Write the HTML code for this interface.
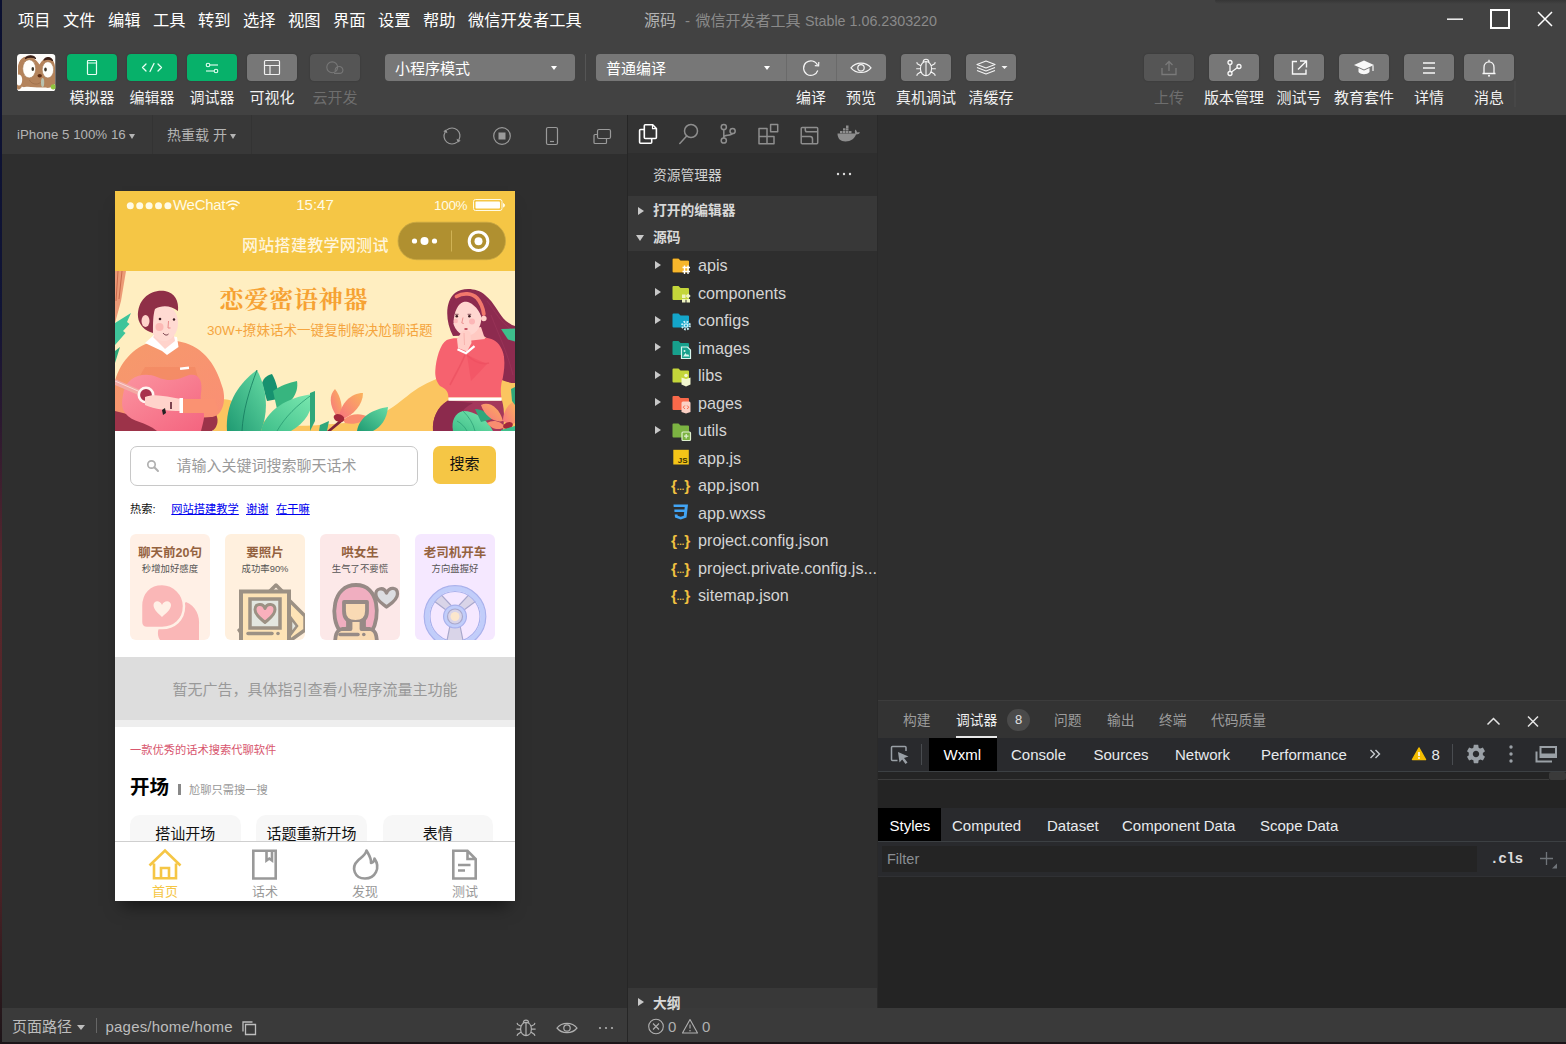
<!DOCTYPE html>
<html lang="zh-CN">
<head>
<meta charset="utf-8">
<title>源码 - 微信开发者工具 Stable 1.06.2303220</title>
<style>
*{box-sizing:border-box;margin:0;padding:0}
html,body{width:1566px;height:1044px;overflow:hidden}
body{background:linear-gradient(180deg,#0b1030 0,#101436 30%,#2a1830 40%,#5a282c 55%,#4a2226 85%,#1c1418 100%);font-family:"Liberation Sans","Noto Sans CJK SC",sans-serif;color:#fff;position:relative}
.abs{position:absolute}
#w{position:absolute;left:0;top:0;width:1566px;height:1044px}
#titlebar{left:2px;top:0;width:1564px;height:40px;background:#424242}
.menu{position:absolute;top:9px;font-size:16.250px;line-height:22px;color:#fff;white-space:nowrap}
#wtitle{left:644px;top:10px;font-size:16px;line-height:22px;color:#9b9b9b;white-space:nowrap}
#toolbar{left:2px;top:40px;width:1564px;height:75px;background:#424242}
.tb{position:absolute;top:54px;width:50px;height:27px;border-radius:4px;background:#777;box-shadow:0 0 1.500px rgba(0,0,0,.3)}
.tb.g{background:#07b16a}
.tb.d{background:#555}
.tb svg{position:absolute;left:0;top:0;width:50px;height:27px}
.tl{position:absolute;top:87px;width:90px;margin-left:-45px;text-align:center;font-size:15px;line-height:22px;color:#f2f2f2;white-space:nowrap}
.tl.d{color:#6e6e6e}
.sel{position:absolute;top:54px;height:27px;background:#777;border-radius:4px;font-size:15px;line-height:30px;color:#fff;padding-left:10px;white-space:nowrap}
.caret{position:absolute;width:0;height:0;border-left:3.5px solid transparent;border-right:3.5px solid transparent;border-top:4.5px solid #fff}
#simbar{left:2px;top:115px;width:625px;height:39px;background:#383838}
#simarea{left:2px;top:154px;width:625px;height:854px;background:#2e2e2e}
#status{left:2px;top:1008px;width:1564px;height:34px;background:#3a3a3a}
</style>
</head>
<body>
<div id="w">
<div class="abs" id="titlebar"></div>
<div class="abs" id="toolbar"></div>
<div class="abs" id="simbar"></div>
<div class="abs" id="simarea"></div>
<div class="abs" id="status"></div>

<!-- MENU -->
<div class="menu" style="left:18px">项目</div>
<div class="menu" style="left:63px">文件</div>
<div class="menu" style="left:108px">编辑</div>
<div class="menu" style="left:153px">工具</div>
<div class="menu" style="left:198px">转到</div>
<div class="menu" style="left:243px">选择</div>
<div class="menu" style="left:288px">视图</div>
<div class="menu" style="left:333px">界面</div>
<div class="menu" style="left:378px">设置</div>
<div class="menu" style="left:423px">帮助</div>
<div class="menu" style="left:468px">微信开发者工具</div>
<div class="abs" id="wtitle"><span style="color:#b2b2b2">源码</span><span style="position:absolute;left:41px;top:0;color:#8a8a8a;font-size:15px">-</span><span style="position:absolute;left:51.500px;top:0;color:#8a8a8a;font-size:15px">微信开发者工具</span><span style="position:absolute;left:161px;top:0;color:#8a8a8a;font-size:14.300px">Stable 1.06.2303220</span></div>
<!-- window controls -->
<svg class="abs" style="left:1440px;top:0" width="126" height="40" viewBox="0 0 126 40">
<path d="M7 19.2H23" stroke="#e8e8e8" stroke-width="1.6" fill="none"/>
<rect x="51" y="10" width="18" height="18" stroke="#fff" stroke-width="2" fill="none"/>
<path d="M98 12L112 26M112 12L98 26" stroke="#fff" stroke-width="1.5" fill="none"/>
</svg>

<!--TOOLBAR-->
<!-- avatar -->
<svg class="abs" style="left:17px;top:53.500px" width="38.500" height="37.500" viewBox="0 0 38.500 37.500">
<defs><clipPath id="avc"><rect width="38.500" height="37.500" rx="3.500"/></clipPath></defs>
<g clip-path="url(#avc)">
<rect width="38.500" height="37.500" fill="#fdfcfa"/>
<path d="M1 12C2 6 5 3 10 2.500C14 2 18 4 22.500 10.500C25 6 28 3.500 32 4C36 5 38 9 38 14V30C36 33 32 34.500 28 34L8 33.500C4 33 1.500 30 1 26Z" fill="#b4835b"/>
<path d="M0 26C3 25 5 29 5 32C4 35 2 36 0 35Z" fill="#b4835b"/>
<path d="M5 34C10 31 18 34 24 33.500C28 33.500 30 33 31 34.500V38H5Z" fill="#fdfcfa"/>
<path d="M8.500 4.500C10 0.800 17 0.800 18.500 4.500C16 2.800 11 2.800 8.500 4.500Z" fill="#3b1f16" stroke="#3b1f16" stroke-width="1.200" stroke-linejoin="round"/>
<path d="M27 6C28.500 2.500 34 3 35.500 6.500C33 4.800 29.500 4.800 27 6Z" fill="#3b1f16" stroke="#3b1f16" stroke-width="1.200" stroke-linejoin="round"/>
<ellipse cx="2" cy="26" rx="3.200" ry="5.500" fill="#fdfcfa"/><path d="M0 5L5 2L0 12Z" fill="#fdfcfa"/>
<ellipse cx="12.200" cy="14.800" rx="6.500" ry="9.100" fill="#fffefb" stroke="#a57a55" stroke-width=".6"/>
<ellipse cx="30.900" cy="15.800" rx="5.700" ry="8.100" fill="#fffefb" stroke="#a57a55" stroke-width=".6"/>
<ellipse cx="15.800" cy="15" rx="1.300" ry="2" fill="#3a3428"/>
<ellipse cx="28.500" cy="15.600" rx="1.300" ry="2" fill="#3a3428"/>
<path d="M12.500 26C14 30 20 31.500 23.500 28.500" stroke="#9a6c48" stroke-width=".7" fill="none"/>
<ellipse cx="22.700" cy="21.800" rx="2.200" ry="1.800" fill="#5a2c14"/>
<ellipse cx="25.600" cy="28.500" rx="1.600" ry="4.500" fill="#b9c2b0"/>
<circle cx="36.300" cy="32.800" r="2.600" fill="#8fc63f"/>
</g>
</svg>
<!-- green buttons -->
<div class="tb g" style="left:67px"><svg viewBox="0 0 50 27"><rect x="20.5" y="6.5" width="9" height="14" rx="0.8" stroke="#e9fff4" stroke-width="1.2" fill="none"/><path d="M21 9H29" stroke="#e9fff4" stroke-width="1"/></svg></div>
<div class="tb g" style="left:127px"><svg viewBox="0 0 50 27"><path d="M19 10L15.5 13.5L19 17M31 10L34.5 13.5L31 17M27 9.5L23 17.5" stroke="#e9fff4" stroke-width="1.3" fill="none" stroke-linecap="round" stroke-linejoin="round"/></svg></div>
<div class="tb g" style="left:187px"><svg viewBox="0 0 50 27"><circle cx="21" cy="11" r="1.8" stroke="#e9fff4" stroke-width="1.1" fill="none"/><path d="M23 11H31" stroke="#e9fff4" stroke-width="1.1"/><circle cx="29" cy="17" r="1.8" stroke="#e9fff4" stroke-width="1.1" fill="none"/><path d="M19 17H27" stroke="#e9fff4" stroke-width="1.1"/></svg></div>
<div class="tb" style="left:247px"><svg viewBox="0 0 50 27"><rect x="17.5" y="6.5" width="15" height="14" rx="1" stroke="#f0f0f0" stroke-width="1.2" fill="none"/><path d="M17.5 11.5H32.5M23 11.5V20.5" stroke="#f0f0f0" stroke-width="1.2" fill="none"/></svg></div>
<div class="tb d" style="left:310px"><svg viewBox="0 0 50 27"><circle cx="22.200" cy="13.300" r="5.400" stroke="#777" stroke-width="1.100" fill="none"/><path d="M25.500 17.600C23.500 13 31 10 32.800 15.200C33.500 18 31.500 19.400 29.500 19.400H24" stroke="#777" stroke-width="1.100" fill="none"/></svg></div>
<div class="tl" style="left:92px">模拟器</div>
<div class="tl" style="left:152px">编辑器</div>
<div class="tl" style="left:212px">调试器</div>
<div class="tl" style="left:272px">可视化</div>
<div class="tl d" style="left:335px">云开发</div>
<!-- selects -->
<div class="sel" style="left:385px;width:190px">小程序模式<i class="caret" style="left:165.500px;top:11.500px"></i></div>
<div class="abs" style="left:585px;top:54px;width:1px;height:27px;background:#555"></div>
<div class="sel" style="left:596px;width:290px">普通编译<i class="caret" style="left:167.500px;top:11.500px"></i>
<i class="abs" style="left:190px;top:0;width:1px;height:27px;background:#6a6a6a"></i>
<i class="abs" style="left:240px;top:0;width:1px;height:27px;background:#6a6a6a"></i>
<svg class="abs" style="left:190px;top:0" width="100" height="27" viewBox="0 0 100 27"><path d="M31.500 11A7.300 7.300 0 1 0 31.800 16.500" stroke="#f4f4f4" stroke-width="1.200" fill="none"/><path d="M28.800 11.600L32.600 11.800L32.800 8" stroke="#f4f4f4" stroke-width="1.200" fill="none"/><path d="M65 13.800C70 7.500 80 7.500 85 13.800C80 20 70 20 65 13.800Z" stroke="#f4f4f4" stroke-width="1.200" fill="none"/><circle cx="75" cy="13.800" r="3.200" stroke="#f4f4f4" stroke-width="1.200" fill="none"/></svg>
</div>
<div class="tl" style="left:811px">编译</div>
<div class="tl" style="left:861px">预览</div>
<div class="tb" style="left:901px"><svg viewBox="0 0 50 27"><path d="M19.400 14.600C19.400 5.200 30.600 5.200 30.600 14.600C30.600 24 19.400 24 19.400 14.600ZM25 8V21.500M22 8.300C22.500 4.300 27.500 4.300 28 8.300M19.800 11.800L16.300 9.800L15.800 8.200M19.400 14.800H15.200M19.900 17.800L16.300 20.200L15.800 21.800M30.200 11.800L33.700 9.800L34.200 8.200M30.600 14.800H34.800M30.100 17.800L33.700 20.200L34.200 21.800" stroke="#f4f4f4" stroke-width="1.100" fill="none" stroke-linejoin="round"/></svg></div>
<div class="tb" style="left:966px"><svg viewBox="0 0 50 27"><path d="M20 7L29 10.500L20 14L11 10.500ZM11 13.500L20 17L29 13.500M11 16.500L20 20L29 16.500" stroke="#f4f4f4" stroke-width="1.100" fill="none" stroke-linejoin="round"/><path d="M35.500 12H41.500L38.500 15Z" fill="#f4f4f4"/></svg></div>
<div class="tl" style="left:926px">真机调试</div>
<div class="tl" style="left:991px">清缓存</div>
<!-- right group -->
<div class="tb d" style="left:1144px"><svg viewBox="0 0 50 27"><path d="M18 14V20.500H32V14M25 17V7.500M21.500 11L25 7.500L28.500 11" stroke="#7a7a7a" stroke-width="1.300" fill="none"/></svg></div>
<div class="tb" style="left:1209px"><svg viewBox="0 0 50 27"><circle cx="21" cy="8.500" r="2" stroke="#f8f8f8" stroke-width="1.300" fill="none"/><circle cx="21" cy="19.500" r="2" stroke="#f8f8f8" stroke-width="1.300" fill="none"/><circle cx="30" cy="12.500" r="2" stroke="#f8f8f8" stroke-width="1.300" fill="none"/><path d="M21 10.500V17.500M22.500 18L28.500 13.500" stroke="#f8f8f8" stroke-width="1.300" fill="none"/></svg></div>
<div class="tb" style="left:1274px"><svg viewBox="0 0 50 27"><path d="M23 7.500H18.500V20H32V15.500M26 7H32.500V13.500M32 7.500L24 15.500" stroke="#f8f8f8" stroke-width="1.400" fill="none"/></svg></div>
<div class="tb" style="left:1339px"><svg viewBox="0 0 50 27"><path d="M25 6.500L35 11L25 15.500L15 11Z" fill="#f8f8f8"/><path d="M19.500 14V18C22 21 28 21 30.500 18V14L25 16.500Z" fill="#f8f8f8"/><path d="M34 11.500V17" stroke="#f8f8f8" stroke-width="1.200"/></svg></div>
<div class="tb" style="left:1404px"><svg viewBox="0 0 50 27"><path d="M19 9H31M19 14H31M19 19H31" stroke="#f8f8f8" stroke-width="1.400"/></svg></div>
<div class="tb" style="left:1464px"><svg viewBox="0 0 50 27"><path d="M18.500 19.500H31.500M20 19.500V13.500C20 6 30 6 30 13.500V19.500M25 7.500V5.800" stroke="#f8f8f8" stroke-width="1.300" fill="none"/><circle cx="25" cy="21.800" r="1" fill="#f8f8f8"/></svg></div>
<div class="tl d" style="left:1169px">上传</div>
<div class="tl" style="left:1234px">版本管理</div>
<div class="tl" style="left:1299px">测试号</div>
<div class="tl" style="left:1364px">教育套件</div>
<div class="tl" style="left:1429px">详情</div>
<div class="tl" style="left:1489px">消息</div>
<div class="abs" style="left:1514px;top:81px;width:2px;height:26px;background:#474747"></div>
<div class="abs" style="left:1215px;top:0;width:351px;height:4px;background:linear-gradient(#363636,rgba(66,66,66,0));border-radius:0 0 0 8px"></div>
<!-- sim bar -->
<div class="abs" style="left:17px;top:124px;font-size:13.300px;line-height:22px;color:#b4b4b4;white-space:nowrap">iPhone 5 100% 16</div>
<i class="caret" style="left:129px;top:133.500px;border-top-color:#b4b4b4;border-width:5px 3.500px 0 3.500px"></i>
<div class="abs" style="left:152px;top:115px;width:1px;height:39px;background:#333"></div>
<div class="abs" style="left:167px;top:124px;font-size:14px;line-height:22px;color:#b4b4b4;white-space:nowrap">热重载 开</div>
<i class="caret" style="left:230px;top:133.500px;border-top-color:#b4b4b4;border-width:5px 3.500px 0 3.500px"></i>
<div class="abs" style="left:251px;top:115px;width:1px;height:39px;background:#333"></div>
<svg class="abs" style="left:430px;top:115px" width="197" height="39" viewBox="0 0 197 39"><g stroke="#9a9a9a" stroke-width="1.200" fill="none">
<path d="M16.900 14.900A7.900 7.900 0 0 1 28.800 25M27.100 27.100A7.900 7.900 0 0 1 15.200 17"/><path d="M16.450 14.300L17.400 18.200L13.300 16.200ZM27.550 27.700L30.700 25.800L26.600 23.800Z" fill="#9a9a9a" stroke="none"/>
<circle cx="72" cy="21" r="8.300"/><rect x="68.500" y="17.500" width="7" height="7" fill="#9a9a9a" stroke="none"/>
<rect x="116.500" y="12.500" width="11" height="17" rx="1.500"/><path d="M120 26.500H124"/>
<rect x="167.500" y="14.500" width="13" height="9" rx="1.500"/><path d="M167.500 19.500H165Q164 19.500 164 20.500V27.500Q164 28.500 165 28.500H175.500Q176.500 28.500 176.500 27.500V24" stroke-linejoin="round"/>
</g></svg>
<!--/TOOLBAR-->
<!--PHONE-->
<style>
#phone{left:115px;top:191px;width:400px;height:710px;background:#fff;box-shadow:0 12px 16px -7px rgba(0,0,0,.5);overflow:hidden;font-family:"Liberation Sans","Noto Sans CJK SC",sans-serif}
#phone .hd{position:absolute;left:0;top:0;width:400px;height:80px;background:#f5c645}
#phone .p{position:absolute;white-space:nowrap}
.card{position:absolute;top:342.500px;width:80px;height:106px;border-radius:6px;overflow:hidden}
.card b{position:absolute;left:-10px;width:100px;top:10.700px;text-align:center;font-size:12.500px;line-height:18px;color:#94623f;font-weight:bold;white-space:nowrap}
.card span{position:absolute;left:-10px;width:100px;top:28px;text-align:center;font-size:9.400px;line-height:14px;color:#555;white-space:nowrap}
.card svg{position:absolute;left:0;top:0}
.tag{position:absolute;top:624px;width:110.500px;height:40px;border-radius:10px;background:#f7f7f7;font-size:15px;line-height:38px;text-align:center;color:#111;white-space:nowrap}
.tbi{position:absolute;top:686.300px;width:60px;margin-left:-30px;text-align:center;font-size:13px;line-height:30px;color:#999}
</style>
<div class="abs" id="phone">
<div class="hd"></div>
<!-- status bar -->
<svg class="p" style="left:0;top:0" width="400" height="30" viewBox="0 0 400 30">
<g fill="#fffbe6"><circle cx="15.300" cy="14.800" r="3.500"/><circle cx="24.700" cy="14.800" r="3.500"/><circle cx="34.100" cy="14.800" r="3.500"/><circle cx="43.500" cy="14.800" r="3.500"/><circle cx="52.900" cy="14.800" r="3.500"/>
<path d="M117.800 19.500L120 17.200A3.100 3.100 0 0 0 115.600 17.200Z"/></g>
<g fill="none" stroke="#fffbe6" stroke-width="1.500"><path d="M113.200 14.800A6.500 6.500 0 0 1 122.400 14.800"/><path d="M111 12.500A9.600 9.600 0 0 1 124.600 12.500"/></g>
<rect x="358.500" y="8.500" width="28.500" height="11" rx="2" fill="none" stroke="#fffbe6" stroke-width="1"/><rect x="360.500" y="10.500" width="24.500" height="7" rx="1" fill="#fffefa"/><path d="M388.500 12.500Q390.800 14 388.500 16.200Z" fill="#fffbe6" stroke="#fffbe6" stroke-width="1"/>
</svg>
<div class="p" style="left:58px;top:4px;font-size:15px;line-height:20px;color:#fffbe6;letter-spacing:-0.300px">WeChat</div>
<div class="p" style="left:150px;width:100px;text-align:center;top:4px;font-size:15px;line-height:20px;color:#fffbe6">15:47</div>
<div class="p" style="left:319px;top:5px;font-size:13.500px;line-height:20px;color:#fffbe6;letter-spacing:-0.300px">100%</div>
<div class="p" style="left:127px;top:44px;font-size:16px;line-height:22px;color:#fff5dc;font-weight:500;letter-spacing:.3px">网站搭建教学网测试</div>
<!-- capsule -->
<svg class="p" style="left:282px;top:30px" width="110" height="40" viewBox="0 0 110 40">
<rect x="1" y="1.200" width="107.500" height="37.500" rx="18.700" fill="#b09030" stroke="#c9a844" stroke-width="0.800"/>
<circle cx="27.500" cy="20" r="4" fill="#fff"/><circle cx="17.500" cy="20" r="2.600" fill="#fff"/><circle cx="37.500" cy="20" r="2.600" fill="#fff"/>
<path d="M54.500 9.500V30.500" stroke="#d8bb5e" stroke-width="0.800"/>
<circle cx="81.500" cy="20.200" r="9.300" fill="none" stroke="#fff" stroke-width="3"/><circle cx="81.500" cy="20.200" r="4" fill="#fff"/>
</svg>
<!--BANNER-->
<svg class="p" style="left:0;top:80px" width="400" height="160" viewBox="0 0 400 160">
<defs>
<linearGradient id="gl1" x1="0" y1="1" x2="1" y2="0"><stop offset="0" stop-color="#1f9a72"/><stop offset="1" stop-color="#66dba4"/></linearGradient>
<linearGradient id="gl2" x1="0" y1="1" x2="1" y2="0"><stop offset="0" stop-color="#3fbf8a"/><stop offset="1" stop-color="#7be8b0"/></linearGradient>
<linearGradient id="gfl" x1="0" y1="1" x2="1" y2="0"><stop offset="0" stop-color="#f7737f"/><stop offset="1" stop-color="#fbb35c"/></linearGradient>
<linearGradient id="gsw" x1="0" y1="0" x2="1" y2="1"><stop offset="0" stop-color="#f59a6a"/><stop offset="1" stop-color="#fa8f75"/></linearGradient>
<linearGradient id="ggt" x1="0" y1="0" x2="1" y2="1"><stop offset="0" stop-color="#fb94a0"/><stop offset="1" stop-color="#f4647f"/></linearGradient>
</defs>
<rect width="400" height="160" fill="#ffeec1"/>
<!-- hill -->
<path d="M98 160V132C116 120 130 140 150 150C180 158 200 154 230 152C262 150 276 138 296 122C322 102 360 96 400 102V160Z" fill="#fbc560"/>
<!-- tree trunk -->
<path d="M0 0H11L6 30L0 52Z" fill="#ec9a76"/><path d="M3 0L1 30M7 0L4 28" stroke="#c96a4c" stroke-width="1" fill="none"/>
<!-- left leaves -->
<path d="M0 52L16 42L12 51L14.500 53L8 60L10.500 62L0 74Z" fill="#3ec49a"/><path d="M0 80L5 76L0 92Z" fill="#2fa77b"/>
<!-- man legs -->
<path d="M0 140C20 128 80 128 100 142C106 150 100 160 96 160H0Z" fill="#9c3349"/>
<!-- man body -->
<path d="M0 110C6 88 22 74 40 70L62 70C86 74 100 90 108 118C112 136 104 146 96 146L40 150L0 140Z" fill="url(#gsw)"/>
<path d="M22 110L30 96H80L86 118L60 126Z" fill="#f0805a" opacity=".45"/>
<!-- guitar -->
<path d="M8 124C10 106 28 100 42 106C56 112 64 108 74 104C84 102 88 110 86 122C84 134 92 140 88 152L86 160H42C30 150 18 152 10 142C6 136 7 130 8 124Z" fill="url(#ggt)"/>
<path d="M0 108L30 121L28 126L0 114Z" fill="#f3a9a4"/><path d="M0 110L30 123" stroke="#fff" stroke-width=".8" opacity=".7"/>
<circle cx="31" cy="124" r="7.200" fill="#a8324c" stroke="#fff6f2" stroke-width="2.600"/>
<!-- arm/hand -->
<path d="M30 126C40 122 52 126 66 128L66 140C52 140 40 138 30 134Z" fill="#ffd3cb"/>
<rect x="64.500" y="127" width="3.500" height="15" fill="#fff"/>
<path d="M68 128H100L104 142H68Z" fill="#fa9272"/>
<path d="M56 131V138" stroke="#5a2030" stroke-width="1.600"/>
<path d="M47 139L50 137L51 142L48 144Z" fill="#222"/>
<rect x="65" y="96" width="9" height="2.600" fill="#fff" transform="rotate(-6 69 97)"/>
<!-- man collar/neck/head -->
<path d="M30 72L40 63L62 66L63.500 76L52 84L47 80Z" fill="#fff"/>
<path d="M38 66L44 60H58L60 70L50 78Z" fill="#ffd3cb"/>
<ellipse cx="49" cy="52" rx="14" ry="18" fill="#ffdad2"/>
<path d="M23 46C22 28 36 18 50 20C60 22 64 30 63 40C56 34 46 34 40 38C38 44 38 52 38 62C30 60 24 54 23 46Z" fill="#8f2f47"/>
<ellipse cx="30.500" cy="50" rx="4" ry="6" fill="#ffd3cb"/>
<circle cx="44.500" cy="56" r="4" fill="#fbb0ae" opacity=".8"/>
<circle cx="45" cy="48" r="1.300" fill="#3a1a20"/><circle cx="59" cy="48.500" r="1.200" fill="#3a1a20"/>
<path d="M53.500 50L53 57L55.500 57" stroke="#e98a8a" stroke-width="1" fill="none"/>
<path d="M48 62C50 64.500 52 64.500 53.500 63" stroke="#5a2030" stroke-width=".9" fill="none"/>
<!-- center leaves -->
<path d="M147 112C149 106 153 104 157 103C161 110 164 120 163 128L152 130Z" fill="#17916f"/>
<path d="M158 120C166 114 174 112 182 110C184 122 176 134 162 138Z" fill="#37b57f"/>
<path d="M112 160C110 132 124 112 142 99C152 118 154 140 146 160Z" fill="url(#gl1)"/>
<path d="M142 99C134 120 128 140 127 160" stroke="#157a5e" stroke-width=".8" fill="none"/>
<path d="M146 160C150 140 172 126 198 123C198 140 190 152 176 160Z" fill="url(#gl2)"/>
<path d="M198 123C182 134 170 146 162 160" stroke="#2a9a72" stroke-width=".8" fill="none"/>
<path d="M195 122L200 120V150L195 160Z" fill="#2fa77b"/>
<!-- center flower -->
<path d="M226 148L212 160H216L228 150Z" fill="#7a2238"/>
<path d="M222 146C214 134 214 124 220 118C226 126 228 136 226 146Z" fill="url(#gfl)"/>
<path d="M224 146C226 132 236 122 248 122C248 134 238 144 228 148Z" fill="url(#gfl)"/>
<path d="M228 149C236 142 246 142 253 146C248 152 238 154 230 152Z" fill="#f98d70"/>
<ellipse cx="224" cy="147" rx="5.500" ry="3.800" fill="#a3283a" transform="rotate(20 224 147)"/>
<path d="M242 160C244 146 258 138 273 136C272 148 266 156 258 160Z" fill="url(#gl1)"/>
<path d="M205 154L214 150L212 160H204Z" fill="#2fa77b"/>
<!-- girl hair back -->
<path d="M338 65C330 50 330 30 340 22C348 16 362 17 370 24C380 32 384 44 391 50C395 53 398 54.500 400 55L400 112C394 112 388 110 383 107C386 98 389 90 388.600 86C386 76 372 66 366 64Z" fill="#8d2b4f"/>
<path d="M372 30C380 40 386 52 396 58M376 44C382 60 392 80 398 104" stroke="#a23a5e" stroke-width=".8" fill="none" opacity=".6"/>
<path d="M386 58L400 57.500V70.500L393 68.500Z" fill="#3dbf8c"/>
<!-- girl pants -->
<path d="M333 129.500H387C390 140 389 152 388 160H318C317 148 322 136 333 129.500Z" fill="#a4375b"/>
<path d="M333 129.500C322 136 317 148 318 160H340C340 148 346 138 358 132Z" fill="#8c2a4d"/>
<!-- girl sweater -->
<path d="M331.800 69C338 66.500 344 67 350 68.500L366 66.500C372 66.500 376 67.500 378.600 69C384 72 388 78 389 86C390 94 389 100 387.800 107C385.500 114 385.500 120 386.300 126.500H333.400C333.500 122 332 118 325 115C321 110 320 105 320.300 99.700C321 88 325 73 331.800 69Z" fill="#f6626f"/>
<path d="M350 84C346 94 340 104 335 114" stroke="#ea4c5e" stroke-width="1.600" fill="none" opacity=".6"/>
<path d="M352 84C358 90 366 94 374 92" stroke="#ea4c5e" stroke-width="1.600" fill="none" opacity=".6"/>
<path d="M352 84L356 110L372 93Z" fill="#f04f60" opacity=".55"/>
<path d="M333.400 126.500H386.600V129.800H333.400Z" fill="#fff"/>
<!-- girl face -->
<path d="M352 58L366 56L370 68L352 70Z" fill="#ffc9c2"/>
<ellipse cx="352" cy="47.500" rx="14.200" ry="17" fill="#ffd6d0"/>
<path d="M349 30C343 33 339 40 338.500 52L334 52C332 36 340 25 349 23.500Z" fill="#8d2b4f"/>
<path d="M349 30C356 31 363 36 366.500 46L372 44C370 31 360 23 349 23.500Z" fill="#8d2b4f"/>
<path d="M341.500 25.500C348 21.500 357 22 362 27C366 31.500 368 37 368.800 43" stroke="#f2786c" stroke-width="3.800" fill="none" stroke-linecap="round"/>
<circle cx="368.800" cy="47.500" r="2.800" fill="#ffd0c8"/>
<circle cx="341.800" cy="45.200" r="1.300" fill="#3a1a20"/><circle cx="354.400" cy="45.200" r="1.300" fill="#3a1a20"/>
<path d="M340 43.300H343.500M352.600 43.300H356.200" stroke="#5a2030" stroke-width=".7"/>
<circle cx="357" cy="50.600" r="3" fill="#fbaeb0" opacity=".8"/><circle cx="340.800" cy="50" r="2.200" fill="#fbaeb0" opacity=".7"/>
<path d="M348 46.500L346.800 52L348.800 52.500" stroke="#e98a8a" stroke-width=".9" fill="none"/>
<ellipse cx="351" cy="58" rx="1.800" ry="1" fill="#c0475a"/>
<!-- girl hands -->
<path d="M347 60.500C350 58.500 354 59 355.500 62L356.500 72L352 80.500L343 77L342 68Z" fill="#ffcfc8"/>
<path d="M349 62L349.500 74" stroke="#f3a8a4" stroke-width=".7" fill="none"/>
<path d="M342.500 78.200L351 82.200L359.500 75.200" stroke="#fff" stroke-width="2.300" fill="none"/>
<!-- right plants -->
<path d="M338 160C336 150 340 142 348 140C360 140 372 148 378 160Z" fill="url(#gl2)"/>
<path d="M348 140C354 146 358 152 360 160M342 150C346 152 350 156 352 160" stroke="#2a9a72" stroke-width=".7" fill="none"/>
<path d="M360 138C366 138 374 142 377 148L366 151Z" fill="#2fa77b"/>
<path d="M366 134C374 130 384 136 388 150C380 152 370 146 366 134Z" fill="url(#gfl)"/>
<path d="M388 150C388 140 394 132 400 130V152C396 154 392 153 388 150Z" fill="url(#gfl)"/>
<path d="M372 152C378 148 386 150 390 156C384 160 376 158 372 152Z" fill="#f98d70"/>
<ellipse cx="393" cy="154.500" rx="5" ry="3.200" fill="#a3283a" transform="rotate(-20 393 154.500)"/>
<path d="M396 118L400 116V134L397 130Z" fill="#2fa77b"/>
<path d="M386 159L400 155V160H386Z" fill="#3dbf8c"/>
<!-- text -->
<text x="179" y="36.500" text-anchor="middle" font-family="'Liberation Serif','Noto Serif CJK SC',serif" font-weight="bold" font-size="24" fill="#f6a233" letter-spacing=".8">恋爱密语神器</text>
<text x="92" y="64" font-family="'Liberation Sans','Noto Sans CJK SC',sans-serif" font-size="13.500" fill="#f5a53f" font-weight="400" letter-spacing=".05">30W+撩妹话术一键复制解决尬聊话题</text>
</svg>
<!--/BANNER-->
<!-- search -->
<div class="p" style="left:15px;top:255px;width:288px;height:40px;border:1px solid #c8c8c8;border-radius:7px;background:#fff"></div>
<svg class="p" style="left:30px;top:267px" width="16" height="16" viewBox="0 0 16 16"><circle cx="6.500" cy="6.500" r="3.700" fill="none" stroke="#b0b0b0" stroke-width="1.700"/><path d="M9.300 9.300L13 13" stroke="#b0b0b0" stroke-width="2" stroke-linecap="round"/></svg>
<div class="p" style="left:61.500px;top:264px;font-size:15px;line-height:22px;color:#9a9a9a">请输入关键词搜索聊天话术</div>
<div class="p" style="left:318px;top:255px;width:63px;height:38px;border-radius:7px;background:#f5c645;font-size:15px;line-height:36px;text-align:center;color:#111">搜索</div>
<div class="p" style="left:15px;top:310px;font-size:11.250px;line-height:16px;color:#111">热索:</div>
<div class="p" style="left:56.300px;top:310px;font-size:11.250px;line-height:16px;color:#0000ee;text-decoration:underline">网站搭建教学</div>
<div class="p" style="left:131px;top:310px;font-size:11.250px;line-height:16px;color:#0000ee;text-decoration:underline">谢谢</div>
<div class="p" style="left:161px;top:310px;font-size:11.250px;line-height:16px;color:#0000ee;text-decoration:underline">在干嘛</div>
<!--CARDS-->
<div class="card" style="left:15px;background:#fff0e6"><svg width="80" height="106" viewBox="0 0 80 106">
<path d="M30 106C26 100 28 92 34 88L56 68C66 72 70 82 69 92V106Z" fill="#fab7b7"/>
<path d="M11 72C11 58 20 50 32 50C44 50 54 60 54 72C54 86 44 94 32 94H17C13 94 11 92 11 88Z" fill="#fab7b7" stroke="#fff0e6" stroke-width="2.500"/>
<path d="M32 71C30 66 24 66 23.500 71C23.500 76 29 80 32 83C35 80 41 76 41 71C40.500 66 34 66 32 71Z" fill="#fff0e6"/>
</svg><b>聊天前20句</b><span>秒增加好感度</span></div>
<div class="card" style="left:110px;background:#fff0de"><svg width="80" height="106" viewBox="0 0 80 106">
<path d="M64 66L80 82V96L66 106H60Z" fill="#fde3b6" stroke="#9c9184" stroke-width="3.500" stroke-linejoin="round"/>
<path d="M66 84L72 92L66 100Z" fill="#e3e6e0" stroke="#9c9184" stroke-width="2.500"/>
<path d="M44 58L51 51L58 58" fill="none" stroke="#9c9184" stroke-width="3.500" stroke-linejoin="round"/>
<path d="M12 96L16 92V102Z" fill="#9c9184"/>
<rect x="16" y="57.500" width="48" height="54" fill="#fde3b6" stroke="#9c9184" stroke-width="4"/>
<rect x="25" y="65" width="30" height="29" fill="#e3e6e0" stroke="#9c9184" stroke-width="3.500"/>
<path d="M40 74.500C38 68.500 30 69.500 30 75.500C30 81.500 37 85.500 40 88.500C43 85.500 50 81.500 50 75.500C50 69.500 42 68.500 40 74.500Z" fill="#fab0bc" stroke="#9c9184" stroke-width="3" stroke-linejoin="round"/>
<path d="M23 99.500H47" stroke="#9c9184" stroke-width="3.500" stroke-linecap="round"/><circle cx="53" cy="99.500" r="1.800" fill="#9c9184"/>
</svg><b>要照片</b><span>成功率90%</span></div>
<div class="card" style="left:205px;background:#fce8e8"><svg width="80" height="106" viewBox="0 0 80 106">
<path d="M20 97C10 84 12 51 36 51C60 51 60 84 52 97L44 94V84H28V94Z" fill="#f0aec0" stroke="#978a86" stroke-width="3.800" stroke-linejoin="round"/>
<path d="M24 68H47V77C47 85 42 88 35.500 88C29 88 24 85 24 77Z" fill="#f9dab4" stroke="#978a86" stroke-width="3.800" stroke-linejoin="round"/>
<path d="M30.500 88V95H22C16 96 15 102 15 112H57C57 102 56 96 50 95H41.500V88" fill="#f9dab4" stroke="#978a86" stroke-width="3.800" stroke-linejoin="round"/>
<path d="M20 100.500H38" stroke="#978a86" stroke-width="3.500" stroke-linecap="round"/><circle cx="43.800" cy="100.500" r="1.800" fill="#978a86"/>
<path d="M66.500 59C63.500 52 54.500 54.500 56 61.500C57 67 63 70 66.500 73C70.500 70 77.500 66 77.500 60C77.500 53 69.500 52.500 66.500 59Z" fill="#dcdde1" stroke="#978a86" stroke-width="3.300" stroke-linejoin="round"/>
</svg><b>哄女生</b><span>生气了不要慌</span></div>
<div class="card" style="left:300px;background:#f5e8ff"><svg width="80" height="106" viewBox="0 0 80 106">
<g transform="translate(0 -7.500)">
<path d="M17 73L33 85L38 81L25 67ZM63 73L47 85L42 81L55 67ZM35 99L32 114H48L45 99Z" fill="#d9d4e8" stroke="#a9a8cc" stroke-width="1.200"/>
<circle cx="40" cy="90" r="25" fill="none" stroke="#a9b1ec" stroke-width="1.200"/>
<circle cx="40" cy="90" r="28" fill="none" stroke="#c1cdfa" stroke-width="5"/>
<circle cx="40" cy="90" r="30.800" fill="none" stroke="#a9b1ec" stroke-width="1.200"/>
<circle cx="40" cy="90" r="11.400" fill="#c1cdfa" stroke="#a9b1ec" stroke-width="1.200"/>
<circle cx="40" cy="90" r="7.500" fill="#d9d4e8" stroke="#a9a8cc" stroke-width="1.200"/>
<circle cx="40" cy="90" r="4.500" fill="#fbe6cc"/>
</g>
</svg><b>老司机开车</b><span>方向盘握好</span></div>
<!--/CARDS-->
<!-- ad -->
<div class="p" style="left:0;top:466px;width:400px;height:63px;background:#dddddd;font-size:15px;line-height:66px;text-align:center;color:#999">暂无广告，具体指引查看小程序流量主功能</div>
<div class="p" style="left:0;top:529px;width:400px;height:7px;background:#eeeeee"></div>
<div class="p" style="left:15px;top:551px;font-size:11.250px;line-height:16px;color:#d8566e">一款优秀的话术搜索代聊软件</div>
<div class="p" style="left:15px;top:582px;font-size:19.500px;line-height:28px;color:#000;font-weight:bold">开场</div>
<div class="p" style="left:63px;top:593px;width:3px;height:11px;background:#888"></div>
<div class="p" style="left:74px;top:591px;font-size:11.250px;line-height:16px;color:#999">尬聊只需搜一搜</div>
<div class="tag" style="left:15px">搭讪开场</div>
<div class="tag" style="left:141.200px">话题重新开场</div>
<div class="tag" style="left:267.500px">表情</div>
<!-- tabbar -->
<div class="p" style="left:0;top:650px;width:400px;height:60px;background:#fff;border-top:1px solid #cfcfcf"></div>
<svg class="p" style="left:0;top:650px" width="400" height="60" viewBox="0 0 400 60">
<g fill="none" stroke="#f5c645" stroke-width="2.600" stroke-linejoin="miter"><path d="M34.500 24.500L50 9.500L65.500 24.500M39 22.500V37.300H61V22.500M46 37.300V27H54V37.300"/></g>
<g fill="none" stroke="#999" stroke-width="2.600"><path d="M138.300 9.800H160.700V37.500H138.300Z M151.500 9.800V19.500L154.300 17.500L157 19.500V9.800"/>
<path d="M251.500 9.500C254 14 256.500 17 256 22C258 21.500 259.500 19.500 259.500 17.500C266 27 260 37.500 250 37.500C239.500 37.500 235.500 26.500 243 19.500C247 16 250.500 14 251.500 9.500Z" stroke-linejoin="round"/>
<path d="M338.300 9.800H352.500L360.700 18V37.500H338.300Z M352.500 9.800V18H360.700 M343 24H355.500 M343 29.500H350"/></g>
</svg>
<div class="tbi" style="left:50px;color:#f5c645">首页</div>
<div class="tbi" style="left:150px">话术</div>
<div class="tbi" style="left:250px">发现</div>
<div class="tbi" style="left:350px">测试</div>
</div>
<!--/PHONE-->
<!--EXPLORER-->
<style>
#actbar{left:628px;top:115px;width:249px;height:38px;background:#333}
#explorer{left:628px;top:153px;width:249px;height:835px;background:#2e2e2e}
.vline{position:absolute;background:#262626;width:1px}
.sec{position:absolute;left:628px;width:249px;height:27px;background:#383838;font-size:13.750px;line-height:28px;font-weight:bold;color:#d8d8d8;padding-left:25px;white-space:nowrap}
.tr{position:absolute;left:698px;font-size:16.200px;line-height:27px;height:27px;color:#d4d4d4;white-space:nowrap;letter-spacing:0}
.tri{position:absolute;width:0;height:0;border-top:4.500px solid transparent;border-bottom:4.500px solid transparent;border-left:6px solid #c8c8c8}
.trd{position:absolute;width:0;height:0;border-left:4.500px solid transparent;border-right:4.500px solid transparent;border-top:6px solid #c8c8c8}
.fic{position:absolute;left:671px;width:20px;height:20px}
.jb{position:absolute;left:671px;font-size:15.500px;line-height:27px;color:#f0c040;font-weight:bold;white-space:nowrap;letter-spacing:-.2px;font-family:"Liberation Sans",sans-serif}
</style>
<div class="abs" id="actbar"></div>
<div class="abs" id="explorer"></div>
<div class="vline" style="left:627px;top:115px;height:927px"></div>
<div class="vline" style="left:877px;top:115px;height:893px;background:#2a2a2a"></div>
<svg class="abs" style="left:628px;top:115px" width="249" height="39" viewBox="0 0 249 39">
<g fill="none" stroke="#fff" stroke-width="1.600" stroke-linejoin="round"><path d="M16.300 14.500H12.600Q11.600 14.500 11.600 15.500V27.200Q11.600 28.200 12.600 28.200H22.700Q23.700 28.200 23.700 27.200V23.500"/><path d="M17.300 9.800H24.700L28.400 13.500V22.500Q28.400 23.500 27.400 23.500H17.300Q16.300 23.500 16.300 22.500V10.800Q16.300 9.800 17.300 9.800Z"/><path d="M24.500 9.800V13.700H28.400" stroke-width="1.200"/></g>
<g fill="none" stroke="#8e8e8e" stroke-width="1.500"><circle cx="63" cy="16" r="6.500"/><path d="M58.700 21L51.800 28.500" stroke-linecap="round"/>
<circle cx="95.800" cy="12" r="2.600"/><circle cx="95.800" cy="25.500" r="2.600"/><circle cx="104.600" cy="16" r="2.600"/><path d="M95.800 14.500V23M95.800 22C95.800 19.500 103 21 104.300 18.600"/>
<path d="M131 13.600H139V21.500H146V28.700H131ZM131 21.500H139V28.700M142.600 9.600H149.700V16.800H142.600Z" stroke-linejoin="round"/>
<rect x="173.200" y="12.400" width="16.500" height="16.300" rx="1"/><path d="M177.300 12.400V15Q177.300 16.800 179 16.800H189.700M173.200 21.500H182Q184.500 21.500 184.500 24V28.700"/></g>
<g fill="#8e8e8e"><path d="M209.500 19.500H228C230 19.500 231.500 18.500 232 17.500C231 17 229.500 17 229 17.500C229 16 228 15 227.500 14.500C226.500 16 226.800 17.500 227.300 18.500H209.500C209.500 23.500 212.500 26.500 217.500 26.500C223 26.500 226.500 23.500 228 19.500Z"/><path d="M212 16H214.500V18.300H212ZM215 16H217.500V18.300H215ZM218 16H220.500V18.300H218ZM221 16H223.500V18.300H221ZM215 13.300H217.500V15.600H215ZM218 13.300H220.500V15.600H218ZM218 10.600H220.500V12.900H218Z"/></g>
</svg>
<div class="abs" style="left:653px;top:165px;font-size:13.750px;line-height:22px;color:#d0d0d0;white-space:nowrap">资源管理器</div>
<svg class="abs" style="left:834px;top:167.500px" width="22" height="12"><circle cx="4" cy="6" r="1.200" fill="#ddd"/><circle cx="10" cy="6" r="1.200" fill="#ddd"/><circle cx="16" cy="6" r="1.200" fill="#ddd"/></svg>
<div class="sec" style="top:195.500px;height:29px;line-height:30px">打开的编辑器</div>
<div class="sec" style="top:223.500px">源码</div>

<i class="tri" style="left:638px;top:206.500px"></i>
<i class="trd" style="left:636px;top:235px"></i>
<!-- tree -->
<i class="tri" style="left:655px;top:260.500px"></i><i class="tri" style="left:655px;top:288px"></i><i class="tri" style="left:655px;top:315.500px"></i><i class="tri" style="left:655px;top:343px"></i><i class="tri" style="left:655px;top:370.500px"></i><i class="tri" style="left:655px;top:398px"></i><i class="tri" style="left:655px;top:425.500px"></i>
<svg class="abs" style="left:670px;top:256px" width="24" height="200" viewBox="0 0 24 200">
<g id="fo"><path d="M2.500 3.500Q2.500 2.500 3.500 2.500H8.500L10.500 4.500H18Q19 4.500 19 5.500V15.500Q19 16.500 18 16.500H3.500Q2.500 16.500 2.500 15.500Z"/></g>
</svg>
<svg class="abs" style="left:670px;top:256px" width="24" height="200" viewBox="0 0 24 200">
<use href="#fo" fill="#f8b62b"/><path d="M12.500 11.500H20M12.500 15.500H20M14.500 9.500V18M18 9.500V18" stroke="#fff" stroke-width="1.400"/>
<use href="#fo" y="27.500" fill="#c4d63a"/><path d="M12 38.500H15.500V42H12ZM12 43H15.500V46.500H12ZM16.500 43H20V46.500H16.500ZM18.200 37.500L20.700 40L18.200 42.500L15.700 40Z" fill="#eef3c0"/>
<use href="#fo" y="55" fill="#14a5c9"/><circle cx="16" cy="69.500" r="3.800" fill="none" stroke="#c8effa" stroke-width="2.200" stroke-dasharray="1.700 1.300"/><circle cx="16" cy="69.500" r="2.300" fill="#c8effa"/><circle cx="16" cy="69.500" r="1" fill="#14a5c9"/>
<use href="#fo" y="82.500" fill="#17a08c"/><path d="M11.500 91H17.500L20.500 94V102.500H11.500Z" fill="#17a08c" stroke="#d8f5ee" stroke-width="1.200"/><path d="M13 100.500L15.500 97L17 99L18 98L19.500 100.500Z" fill="#d8f5ee"/><circle cx="14.500" cy="95" r="1" fill="#d8f5ee"/>
<use href="#fo" y="110" fill="#c4d63a"/><path d="M11.500 121.500L16 123L20.500 121.500V128.500L16 130.500L11.500 128.500Z" fill="#f2f7d0"/><circle cx="16" cy="119.500" r="1.800" fill="#f2f7d0"/>
<use href="#fo" y="137.500" fill="#f9694a"/><path d="M11.500 147Q11.500 145.500 13 145.500H19Q20.500 145.500 20.500 147V156L16 157.500L11.500 156Z" fill="#fbd0c4"/><path d="M14.800 149.500L13.300 151.200L14.800 153M17.200 149.500L18.700 151.200L17.200 153" stroke="#f9694a" stroke-width="1" fill="none"/>
<use href="#fo" y="165" fill="#7cb342"/><rect x="12" y="176" width="8.500" height="8.500" rx="1" fill="#7cb342" stroke="#dff0cf" stroke-width="1.200"/><path d="M14 180.200H18.500M16.200 178V182.500" stroke="#dff0cf" stroke-width="1.300"/>
</svg>
<div class="tr" style="top:252px">apis</div>
<div class="tr" style="top:279.5px">components</div>
<div class="tr" style="top:307px">configs</div>
<div class="tr" style="top:334.5px">images</div>
<div class="tr" style="top:362px">libs</div>
<div class="tr" style="top:389.5px">pages</div>
<div class="tr" style="top:417px">utils</div>
<div class="tr" style="top:444.5px">app.js</div>
<div class="tr" style="top:472px">app.json</div>
<div class="tr" style="top:499.5px">app.wxss</div>
<div class="tr" style="top:527px">project.config.json</div>
<div class="tr" style="top:554.5px">project.private.config.js...</div>
<div class="tr" style="top:582px">sitemap.json</div>
<svg class="abs" style="left:668px;top:446px" width="26" height="160" viewBox="0 0 26 160">
<rect x="5.300" y="3.800" width="15.500" height="14.700" fill="#f5c518"/><text x="14.600" y="16.800" text-anchor="middle" font-family="'Liberation Sans',sans-serif" font-weight="bold" font-size="8" fill="#3a3000">JS</text>
<path transform="translate(.5 1)" d="M5 57.500H19.500L18 70.500L12.200 72.500L6.500 70.500L6.200 67.500H9L9.200 68.800L12.200 69.800L15.300 68.800L15.700 65H6L5.800 62.500H16L16.200 60H5.200Z" fill="#42a5f5"/>
</svg>
<div class="jb" style="top:472px">{<span style="font-size:9px;letter-spacing:0;position:relative;top:-1px">...</span>}</div>
<div class="jb" style="top:527px">{<span style="font-size:9px;letter-spacing:0;position:relative;top:-1px">...</span>}</div>
<div class="jb" style="top:554.5px">{<span style="font-size:9px;letter-spacing:0;position:relative;top:-1px">...</span>}</div>
<div class="jb" style="top:582px">{<span style="font-size:9px;letter-spacing:0;position:relative;top:-1px">...</span>}</div>
<!-- outline -->
<div class="abs" style="left:628px;top:988px;width:249px;height:20px;background:#383838"></div>
<i class="tri" style="left:638px;top:997.500px"></i>
<div class="abs" style="left:653px;top:992.500px;font-size:13.750px;line-height:22px;font-weight:bold;color:#d8d8d8;white-space:nowrap">大纲</div>
<!--/EXPLORER-->
<!--DEBUGGER-->
<style>
#editor{left:878px;top:115px;width:688px;height:585px;background:#2e2e2e}
#dbg{left:878px;top:700px;width:688px;height:308px;background:#242424}
.pt{position:absolute;top:709.500px;font-size:13.750px;line-height:22px;color:#9d9d9d;white-space:nowrap}
.dt{position:absolute;top:743.500px;font-size:15px;line-height:22px;color:#e8eaed;white-space:nowrap;font-family:"Liberation Sans",sans-serif}
.st{position:absolute;top:814.500px;font-size:15px;line-height:22px;color:#e8eaed;white-space:nowrap;font-family:"Liberation Sans",sans-serif}
</style>
<div class="abs" id="editor"></div>
<div class="abs" id="dbg"></div>
<div class="abs" style="left:878px;top:700px;width:688px;height:1px;background:#3c3c3c"></div>
<div class="abs" style="left:878px;top:701px;width:688px;height:37px;background:#333"></div>
<div class="pt" style="left:903px">构建</div>
<div class="pt" style="left:956px;color:#f0f0f0">调试器</div>
<div class="abs" style="left:956px;top:736px;width:41px;height:1.500px;background:#e8e8e8"></div>
<div class="abs" style="left:1007px;top:709px;width:23px;height:22px;border-radius:11px;background:#4a4a4a;font-size:13px;line-height:22px;text-align:center;color:#e0e0e0;font-family:'Liberation Sans',sans-serif">8</div>
<div class="pt" style="left:1054px">问题</div>
<div class="pt" style="left:1107px">输出</div>
<div class="pt" style="left:1159px">终端</div>
<div class="pt" style="left:1211px">代码质量</div>
<svg class="abs" style="left:1480px;top:708px" width="70" height="26" viewBox="0 0 70 26"><path d="M7.500 16.500L13.500 10.500L19.500 16.500M48 8.500L58 18.500M58 8.500L48 18.500" stroke="#e4e4e4" stroke-width="1.500" fill="none"/></svg>
<!-- devtools tab bar -->
<div class="abs" style="left:878px;top:738px;width:688px;height:33px;background:#292a2d"></div>
<div class="abs" style="left:878px;top:770.500px;width:688px;height:1px;background:#3c4043"></div>
<svg class="abs" style="left:888px;top:743px" width="24" height="24" viewBox="0 0 24 24"><path d="M9.500 17.500H4.500Q3.500 17.500 3.500 16.500V4.500Q3.500 3.500 4.500 3.500H17Q18 3.500 18 4.500V8" stroke="#9aa0a6" stroke-width="1.500" fill="none"/><path d="M10 9L20.500 13.500L16 15L19.500 19.500L17.500 21L14.200 16.500L11.500 19.500Z" fill="#9aa0a6"/></svg>
<div class="abs" style="left:921px;top:744px;width:1px;height:21px;background:#494c50"></div>
<div class="abs" style="left:929px;top:738px;width:68px;height:33px;background:#000"></div>
<div class="dt" style="left:943.500px;color:#fff">Wxml</div>
<div class="dt" style="left:1011px">Console</div>
<div class="dt" style="left:1093.500px">Sources</div>
<div class="dt" style="left:1175px">Network</div>
<div class="dt" style="left:1261px">Performance</div>
<svg class="abs" style="left:1366px;top:745px" width="20" height="18" viewBox="0 0 20 18"><path d="M4.500 5L8.500 9L4.500 13M9.500 5L13.500 9L9.500 13" stroke="#c8ccd0" stroke-width="1.400" fill="none"/></svg>
<svg class="abs" style="left:1411px;top:746px" width="16" height="16" viewBox="0 0 16 16"><path d="M8 2L14.500 13.500H1.500Z" fill="#f4bd00" stroke="#f4bd00" stroke-width="1.500" stroke-linejoin="round"/><path d="M8 6V10" stroke="#fff" stroke-width="1.600"/><circle cx="8" cy="12" r=".9" fill="#fff"/></svg>
<div class="dt" style="left:1431.500px">8</div>
<div class="abs" style="left:1452px;top:744px;width:1px;height:21px;background:#494c50"></div>
<svg class="abs" style="left:1465px;top:743px" width="22" height="22" viewBox="0 0 24 24"><path fill="#9aa0a6" d="M19.430 12.980c.040-.320.070-.640.070-.980s-.030-.660-.070-.980l2.110-1.650c.190-.150.240-.420.120-.640l-2-3.460c-.120-.220-.390-.300-.610-.220l-2.490 1c-.520-.400-1.080-.730-1.690-.980l-.380-2.650C14.460 2.180 14.250 2 14 2h-4c-.250 0-.460.180-.490.420l-.380 2.650c-.610.250-1.170.590-1.690.980l-2.490-1c-.230-.090-.490 0-.610.220l-2 3.460c-.130.220-.070.490.120.640l2.110 1.650c-.40.320-.70.650-.70.980s.30.660.70.980l-2.110 1.650c-.190.150-.240.420-.120.640l2 3.460c.120.220.390.300.610.220l2.490-1c.520.400 1.080.730 1.690.980l.380 2.650c.30.240.240.420.490.420h4c.250 0 .460-.180.490-.420l.380-2.650c.610-.250 1.170-.590 1.690-.980l2.490 1c.230.090.490 0 .610-.220l2-3.460c.120-.220.070-.490-.120-.640l-2.110-1.650zM12 15.500c-1.930 0-3.500-1.570-3.500-3.500s1.570-3.500 3.500-3.500 3.500 1.570 3.500 3.500-1.570 3.500-3.500 3.500z"/></svg>
<svg class="abs" style="left:1505px;top:743px" width="12" height="22" viewBox="0 0 12 22"><circle cx="6" cy="4" r="1.700" fill="#9aa0a6"/><circle cx="6" cy="11" r="1.700" fill="#9aa0a6"/><circle cx="6" cy="18" r="1.700" fill="#9aa0a6"/></svg>
<svg class="abs" style="left:1533px;top:743px" width="26" height="22" viewBox="0 0 26 22"><path d="M7.500 4H23V14H7.500Z M3.500 8.500V18.500H19" stroke="#9aa0a6" stroke-width="2" fill="none"/><path d="M8 12H22.500" stroke="#9aa0a6" stroke-width="3"/></svg>
<!-- wxml strip -->
<div class="abs" style="left:878px;top:779px;width:671px;height:1px;background:#3c3c3c"></div>
<div class="abs" style="left:1549px;top:772px;width:17px;height:8px;background:#3a3a3a;border-radius:2px"></div>
<!-- styles bar -->
<div class="abs" style="left:878px;top:807.500px;width:688px;height:1px;background:#3c4043"></div>
<div class="abs" style="left:878px;top:808px;width:688px;height:33px;background:#292a2d"></div>
<div class="abs" style="left:878px;top:841px;width:688px;height:1px;background:#3c4043"></div>
<div class="abs" style="left:878px;top:808px;width:63px;height:33px;background:#000"></div>
<div class="st" style="left:889.500px;color:#fff">Styles</div>
<div class="st" style="left:952px">Computed</div>
<div class="st" style="left:1047px">Dataset</div>
<div class="st" style="left:1122px">Component Data</div>
<div class="st" style="left:1260px">Scope Data</div>
<div class="abs" style="left:878px;top:842px;width:688px;height:34px;background:#292a2d"></div>
<div class="abs" style="left:882px;top:846px;width:595px;height:26px;background:#242424"></div>
<div class="abs" style="left:887px;top:848px;font-size:14.500px;line-height:22px;color:#8a8e93;font-family:'Liberation Sans',sans-serif">Filter</div>
<div class="abs" style="left:1490px;top:848px;font-size:14.500px;line-height:22px;color:#dcdcdc;font-weight:bold;font-family:'Liberation Mono',monospace;letter-spacing:-.5px">.cls</div>
<svg class="abs" style="left:1536px;top:848px" width="26" height="24" viewBox="0 0 26 24"><path d="M4 10.500H17M10.500 4V17" stroke="#70757a" stroke-width="1.300"/><path d="M21 15.500V20.500H16Z" fill="#70757a"/></svg>
<div class="abs" style="left:878px;top:876px;width:688px;height:1px;background:#303134"></div>
<!--/DEBUGGER-->
<!--STATUS-->
<div class="abs" style="left:12px;top:1016px;font-size:15px;line-height:22px;color:#bdbdbd;white-space:nowrap">页面路径</div>
<i class="caret" style="left:77px;top:1024.500px;border-top-color:#bdbdbd;border-width:5px 4px 0 4px"></i>
<div class="abs" style="left:96px;top:1018px;width:1px;height:15px;background:#666"></div>
<div class="abs" style="left:105.500px;top:1016px;font-size:15px;line-height:22px;color:#bdbdbd;white-space:nowrap;letter-spacing:.2px">pages/home/home</div>
<svg class="abs" style="left:240px;top:1018px" width="20" height="20" viewBox="0 0 20 20"><path d="M5.500 6.500H15.500V16.500H5.500Z" stroke="#bdbdbd" stroke-width="1.300" fill="none"/><path d="M3 13.500V4H12.500" stroke="#bdbdbd" stroke-width="1.300" fill="none"/></svg>
<svg class="abs" style="left:512px;top:1015px" width="110" height="26" viewBox="0 0 110 26"><g stroke="#b0b0b0" stroke-width="1.200" fill="none">
<path d="M8.600 14C8.600 5.200 19.400 5.200 19.400 14C19.400 22.800 8.600 22.800 8.600 14ZM14 7.600V20.400M11.200 7.900C11.700 4.100 16.300 4.100 16.800 7.900M9 11.300L5.600 9.400L5.100 7.900M8.600 14.200H4.400M9.100 17.100L5.600 19.400L5.100 20.900M19 11.300L22.400 9.400L22.900 7.900M19.400 14.200H23.600M18.900 17.100L22.400 19.400L22.900 20.900"/>
<path d="M45 13C50 6.700 60 6.700 65 13C60 19.200 50 19.200 45 13Z"/><circle cx="55" cy="13" r="3.200"/></g>
<g fill="#b0b0b0"><circle cx="88" cy="13" r="1.100"/><circle cx="94" cy="13" r="1.100"/><circle cx="100" cy="13" r="1.100"/></g></svg>
<svg class="abs" style="left:644px;top:1015px" width="80" height="24" viewBox="0 0 80 24"><g stroke="#b0b0b0" stroke-width="1.100" fill="none"><circle cx="12" cy="11.500" r="7.300"/><path d="M9 8.500L15 14.500M15 8.500L9 14.500"/><path d="M46 4.500L53.500 18H38.500Z" stroke-linejoin="round"/><path d="M46 9.500V13.500"/></g><circle cx="46" cy="15.700" r=".8" fill="#b0b0b0"/>
<text x="24" y="17" font-family="'Liberation Sans',sans-serif" font-size="15" fill="#b0b0b0">0</text><text x="58" y="17" font-family="'Liberation Sans',sans-serif" font-size="15" fill="#b0b0b0">0</text></svg>
<!--/STATUS-->
</div>
</body>
</html>
